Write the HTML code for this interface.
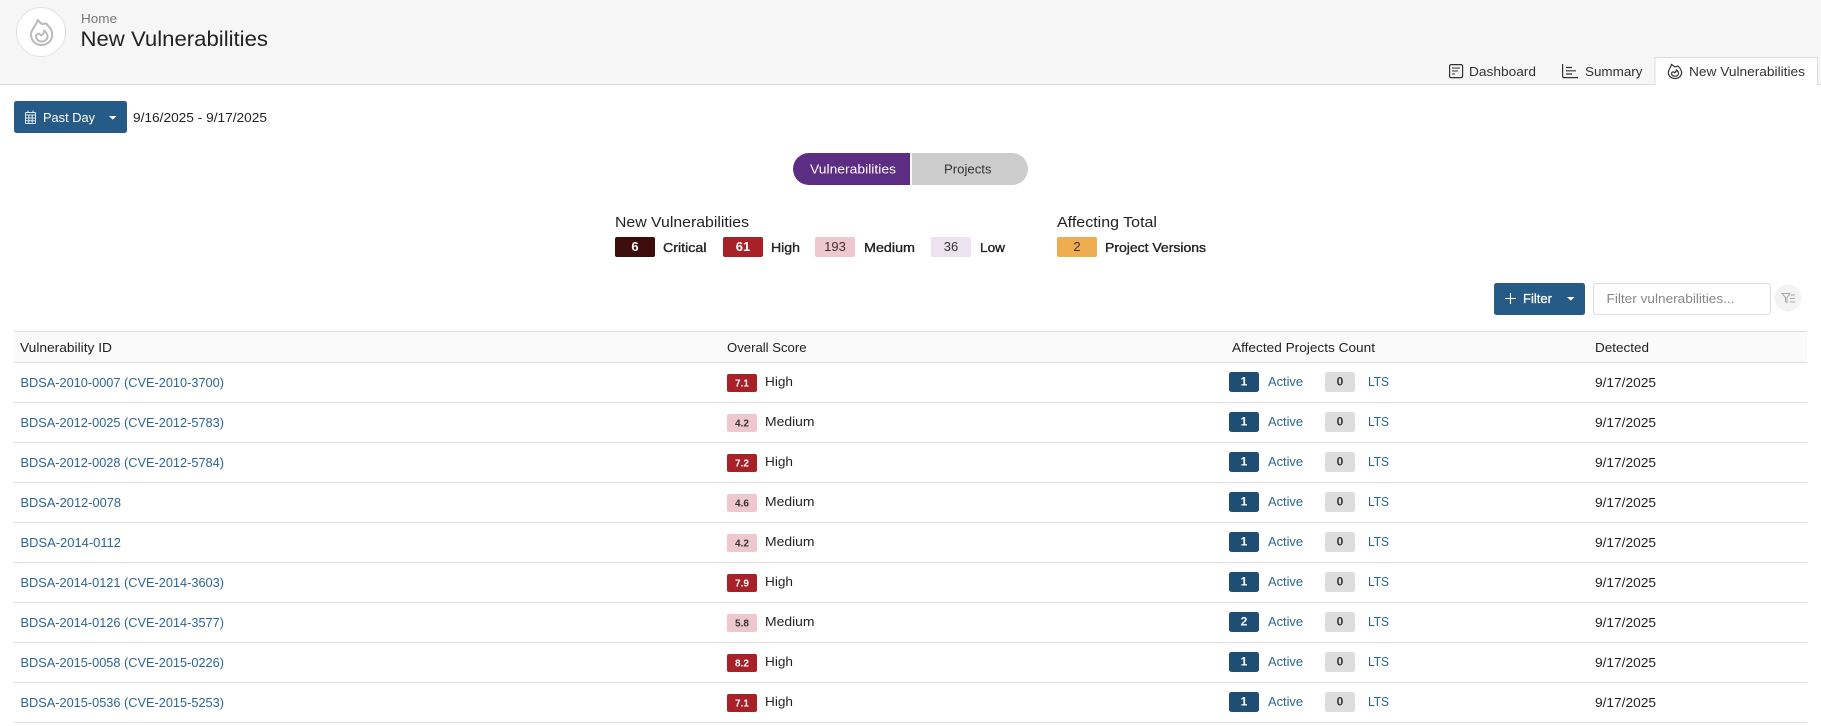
<!DOCTYPE html>
<html><head><meta charset="utf-8"><title>New Vulnerabilities</title>
<style>
html,body{margin:0;padding:0;background:#fff;width:1821px;height:726px;overflow:hidden}
svg{display:block}
text{font-family:"Liberation Sans",sans-serif;font-size:13px;fill:#222}
.b{stroke:#222;stroke-width:.35px}
.bw{font-weight:bold;fill:#fff}
.w{fill:#fff}
.f{fill:#fff;stroke:#fff;stroke-width:.25px}
.l{fill:#2b6593}
.c{text-anchor:middle}
.s{font-size:10px;font-weight:bold}
.n{font-size:12px;font-weight:bold}
</style></head><body>
<svg width="1821" height="726" viewBox="0 0 1821 726" xmlns="http://www.w3.org/2000/svg">
<!-- header -->
<rect width="1821" height="84" fill="#f6f6f6"/>
<rect y="84" width="1821" height="1" fill="#dcdcdc"/>
<circle cx="41" cy="32" r="24.5" fill="#fff" stroke="#e2e2e2"/>
<g fill="none" stroke="#bbbbbb" stroke-width="2" stroke-linejoin="round">
<path d="M37.7 20 L41.8 24 L46 23.5 C49.5 27 52.2 30 52.2 34.5 C52.2 40.5 47.5 45 41.5 45 C35.5 45 31 40.5 31 34.5 C31 29 35.8 26.5 37.7 20Z"/>
<path d="M36 35.5 C36 39.5 38.5 41.5 41.5 41.5 C45 41.5 47.5 39.5 47.5 36.5 C47.5 34 46 32.5 44 30.5 C44 33.5 43 34.5 41 35.5 C39.5 33 38 33 36 35.5Z"/>
</g>
<text x="81" y="23" textLength="36" lengthAdjust="spacingAndGlyphs" style="fill:#777">Home</text>
<text x="80.5" y="46" textLength="187.5" lengthAdjust="spacingAndGlyphs" style="font-size:21.5px">New Vulnerabilities</text>

<!-- tabs -->
<path d="M1655 85 V57.5 H1817.5 V85" fill="#fff" stroke="#dcdcdc"/>
<rect x="1656" y="84" width="161" height="2" fill="#fff"/>
<g fill="none" stroke="#333" stroke-width="1.2">
<rect x="1449.6" y="64.6" width="13" height="13" rx="1.5"/>
<path d="M1452 68 H1460 M1452 71 H1458 M1452 74 H1455" stroke="#777" stroke-width="1.6"/>
<path d="M1562.6 64 V76 Q1562.6 77.6 1564 77.6 H1578"/>
<path d="M1566 67.5 H1572 M1566 70.8 H1576 M1566 74 H1572"/>
<path d="M1671.5 64.5 L1675 67 L1678 66 C1680 68 1681.6 70 1681.6 72.5 C1681.6 76 1678.8 78.5 1675 78.5 C1671.2 78.5 1668.4 76 1668.4 72.5 C1668.4 69 1670.8 68 1671.5 64.5Z"/>
<path d="M1671.5 73 C1671.5 75.2 1673 76.2 1675 76.2 C1677 76.2 1678.5 75 1678.5 73.3 C1678.5 71.8 1677.5 70.8 1676.5 70 C1676.5 71.5 1675.6 72.2 1674.6 72.8 C1673.5 71.4 1672.6 71.6 1671.5 73Z"/>
</g>
<text x="1469" y="76" textLength="67" lengthAdjust="spacingAndGlyphs" style="fill:#333">Dashboard</text>
<text x="1585" y="76" textLength="57.5" lengthAdjust="spacingAndGlyphs" style="fill:#333">Summary</text>
<text x="1689" y="76" textLength="116" lengthAdjust="spacingAndGlyphs" style="fill:#333">New Vulnerabilities</text>

<!-- date button -->
<rect x="14" y="101" width="113" height="32" rx="2.5" fill="#265b88"/>
<g fill="none" stroke="#dfe8f0" stroke-width="1">
<rect x="25.5" y="112.5" width="10" height="11" rx="0.5"/>
<path d="M25.5 115 H35.5 M25.5 118 H35.5 M25.5 120.8 H35.5 M28.8 115 V123.5 M32.2 115 V123.5 M28 110.5 V112.5 M33 110.5 V112.5"/>
</g>
<text x="43" y="122" textLength="52" lengthAdjust="spacingAndGlyphs" class="w">Past Day</text>
<path d="M109 116 H116.5 L112.75 119.6Z" fill="#fff"/>
<text x="133" y="122" textLength="134" lengthAdjust="spacingAndGlyphs">9/16/2025 - 9/17/2025</text>

<!-- toggle -->
<path d="M910 153 H809 A16 16 0 0 0 809 185 H910Z" fill="#5c2d82"/>
<path d="M912 153 H1012 A16 16 0 0 1 1012 185 H912Z" fill="#cccccc"/>
<text x="810" y="173.5" textLength="86" lengthAdjust="spacingAndGlyphs" class="w">Vulnerabilities</text>
<text x="944" y="173.5" textLength="47.5" lengthAdjust="spacingAndGlyphs" style="fill:#333">Projects</text>

<!-- summary -->
<text x="615" y="227" textLength="134" lengthAdjust="spacingAndGlyphs" style="font-size:14.5px">New Vulnerabilities</text>
<text x="1057" y="227" textLength="100" lengthAdjust="spacingAndGlyphs" style="font-size:14.5px">Affecting Total</text>
<rect x="615" y="237" width="40" height="20" rx="2" fill="#3d0c0c"/>
<rect x="723" y="237" width="40" height="20" rx="2" fill="#a92128"/>
<rect x="815" y="237" width="40" height="20" rx="2" fill="#efc8cf"/>
<rect x="931" y="237" width="40" height="20" rx="2" fill="#ede3f0"/>
<rect x="1057" y="237" width="40" height="20" rx="2" fill="#f0ad50"/>
<text x="635" y="251" class="c bw">6</text>
<text x="743" y="251" class="c bw">61</text>
<text x="835" y="251" class="c" style="fill:#333">193</text>
<text x="951" y="251" class="c" style="fill:#333">36</text>
<text x="1077" y="251" class="c" style="fill:#333">2</text>
<text x="663" y="252" textLength="43.5" lengthAdjust="spacingAndGlyphs" class="b">Critical</text>
<text x="771" y="252" textLength="29" lengthAdjust="spacingAndGlyphs" class="b">High</text>
<text x="864" y="252" textLength="51" lengthAdjust="spacingAndGlyphs" class="b">Medium</text>
<text x="980" y="252" textLength="25" lengthAdjust="spacingAndGlyphs" class="b">Low</text>
<text x="1105" y="252" textLength="101" lengthAdjust="spacingAndGlyphs" class="b">Project Versions</text>

<!-- filter -->
<rect x="1494" y="283" width="91" height="32" rx="2.5" fill="#265b88"/>
<path d="M1505 298.5 H1516 M1510.5 293 V304" stroke="#fff" stroke-width="1.1"/>
<text x="1523" y="303" textLength="29" lengthAdjust="spacingAndGlyphs" class="f">Filter</text>
<path d="M1567 297 H1574.5 L1570.75 300.6Z" fill="#fff"/>
<rect x="1593.5" y="283.5" width="177" height="31" rx="3" fill="#fff" stroke="#dddddd"/>
<text x="1606.5" y="303" textLength="128" lengthAdjust="spacingAndGlyphs" style="fill:#888">Filter vulnerabilities...</text>
<circle cx="1788" cy="298" r="13.5" fill="#f3f3f3"/>
<path d="M1782 293.5 H1790 L1787 297.5 V302.5 L1785.5 301.5 V297.5Z M1791 295 H1795 M1790 298.5 H1795 M1790 302 H1795" fill="none" stroke="#aaa" stroke-width="1"/>

<!-- table head -->
<rect x="14" y="331" width="1793" height="31" fill="#fafafa"/>
<rect x="14" y="331" width="1793" height="1" fill="#dedede"/>
<text x="20" y="352" textLength="92" lengthAdjust="spacingAndGlyphs">Vulnerability ID</text>
<text x="727" y="352" textLength="79.5" lengthAdjust="spacingAndGlyphs">Overall Score</text>
<text x="1232" y="352" textLength="143" lengthAdjust="spacingAndGlyphs">Affected Projects Count</text>
<text x="1595" y="352" textLength="54" lengthAdjust="spacingAndGlyphs">Detected</text>

<!-- row lines -->
<g fill="#dedede">
<rect x="14" y="362" width="1793" height="1"/>
<rect x="14" y="402" width="1793" height="1"/><rect x="14" y="442" width="1793" height="1"/><rect x="14" y="482" width="1793" height="1"/>
<rect x="14" y="522" width="1793" height="1"/><rect x="14" y="562" width="1793" height="1"/><rect x="14" y="602" width="1793" height="1"/>
<rect x="14" y="642" width="1793" height="1"/><rect x="14" y="682" width="1793" height="1"/><rect x="14" y="722" width="1793" height="1"/>
</g>

<!-- row 1 -->
<g transform="translate(0,0)">
<text x="20.5" y="387" textLength="203.5" lengthAdjust="spacingAndGlyphs" class="l">BDSA-2010-0007 (CVE-2010-3700)</text>
<rect x="727" y="374" width="30" height="18" rx="2" fill="#a92128"/><text x="742" y="386.5" class="c s w">7.1</text>
<text x="765" y="386" textLength="28" lengthAdjust="spacingAndGlyphs">High</text>
<rect x="1229" y="372" width="30" height="20" rx="2.5" fill="#1f4e75"/><text x="1244" y="385.5" class="c n w">1</text>
<text x="1268" y="386" textLength="35" lengthAdjust="spacingAndGlyphs" class="l">Active</text>
<rect x="1325" y="372" width="30" height="20" rx="2.5" fill="#dddddd"/><text x="1340" y="385.5" class="c n" style="fill:#333">0</text>
<text x="1368" y="386" textLength="21" lengthAdjust="spacingAndGlyphs" class="l">LTS</text>
<text x="1595" y="387" textLength="61" lengthAdjust="spacingAndGlyphs">9/17/2025</text>
</g>
<!-- row 2 -->
<g transform="translate(0,40)">
<text x="20.5" y="387" textLength="203.5" lengthAdjust="spacingAndGlyphs" class="l">BDSA-2012-0025 (CVE-2012-5783)</text>
<rect x="727" y="374" width="30" height="18" rx="2" fill="#efc8cf"/><text x="742" y="386.5" class="c s" style="fill:#333">4.2</text>
<text x="765" y="386" textLength="49.5" lengthAdjust="spacingAndGlyphs">Medium</text>
<rect x="1229" y="372" width="30" height="20" rx="2.5" fill="#1f4e75"/><text x="1244" y="385.5" class="c n w">1</text>
<text x="1268" y="386" textLength="35" lengthAdjust="spacingAndGlyphs" class="l">Active</text>
<rect x="1325" y="372" width="30" height="20" rx="2.5" fill="#dddddd"/><text x="1340" y="385.5" class="c n" style="fill:#333">0</text>
<text x="1368" y="386" textLength="21" lengthAdjust="spacingAndGlyphs" class="l">LTS</text>
<text x="1595" y="387" textLength="61" lengthAdjust="spacingAndGlyphs">9/17/2025</text>
</g>
<!-- row 3 -->
<g transform="translate(0,80)">
<text x="20.5" y="387" textLength="203.5" lengthAdjust="spacingAndGlyphs" class="l">BDSA-2012-0028 (CVE-2012-5784)</text>
<rect x="727" y="374" width="30" height="18" rx="2" fill="#a92128"/><text x="742" y="386.5" class="c s w">7.2</text>
<text x="765" y="386" textLength="28" lengthAdjust="spacingAndGlyphs">High</text>
<rect x="1229" y="372" width="30" height="20" rx="2.5" fill="#1f4e75"/><text x="1244" y="385.5" class="c n w">1</text>
<text x="1268" y="386" textLength="35" lengthAdjust="spacingAndGlyphs" class="l">Active</text>
<rect x="1325" y="372" width="30" height="20" rx="2.5" fill="#dddddd"/><text x="1340" y="385.5" class="c n" style="fill:#333">0</text>
<text x="1368" y="386" textLength="21" lengthAdjust="spacingAndGlyphs" class="l">LTS</text>
<text x="1595" y="387" textLength="61" lengthAdjust="spacingAndGlyphs">9/17/2025</text>
</g>
<!-- row 4 -->
<g transform="translate(0,120)">
<text x="20.5" y="387" textLength="100.5" lengthAdjust="spacingAndGlyphs" class="l">BDSA-2012-0078</text>
<rect x="727" y="374" width="30" height="18" rx="2" fill="#efc8cf"/><text x="742" y="386.5" class="c s" style="fill:#333">4.6</text>
<text x="765" y="386" textLength="49.5" lengthAdjust="spacingAndGlyphs">Medium</text>
<rect x="1229" y="372" width="30" height="20" rx="2.5" fill="#1f4e75"/><text x="1244" y="385.5" class="c n w">1</text>
<text x="1268" y="386" textLength="35" lengthAdjust="spacingAndGlyphs" class="l">Active</text>
<rect x="1325" y="372" width="30" height="20" rx="2.5" fill="#dddddd"/><text x="1340" y="385.5" class="c n" style="fill:#333">0</text>
<text x="1368" y="386" textLength="21" lengthAdjust="spacingAndGlyphs" class="l">LTS</text>
<text x="1595" y="387" textLength="61" lengthAdjust="spacingAndGlyphs">9/17/2025</text>
</g>
<!-- row 5 -->
<g transform="translate(0,160)">
<text x="20.5" y="387" textLength="100.5" lengthAdjust="spacingAndGlyphs" class="l">BDSA-2014-0112</text>
<rect x="727" y="374" width="30" height="18" rx="2" fill="#efc8cf"/><text x="742" y="386.5" class="c s" style="fill:#333">4.2</text>
<text x="765" y="386" textLength="49.5" lengthAdjust="spacingAndGlyphs">Medium</text>
<rect x="1229" y="372" width="30" height="20" rx="2.5" fill="#1f4e75"/><text x="1244" y="385.5" class="c n w">1</text>
<text x="1268" y="386" textLength="35" lengthAdjust="spacingAndGlyphs" class="l">Active</text>
<rect x="1325" y="372" width="30" height="20" rx="2.5" fill="#dddddd"/><text x="1340" y="385.5" class="c n" style="fill:#333">0</text>
<text x="1368" y="386" textLength="21" lengthAdjust="spacingAndGlyphs" class="l">LTS</text>
<text x="1595" y="387" textLength="61" lengthAdjust="spacingAndGlyphs">9/17/2025</text>
</g>
<!-- row 6 -->
<g transform="translate(0,200)">
<text x="20.5" y="387" textLength="203.5" lengthAdjust="spacingAndGlyphs" class="l">BDSA-2014-0121 (CVE-2014-3603)</text>
<rect x="727" y="374" width="30" height="18" rx="2" fill="#a92128"/><text x="742" y="386.5" class="c s w">7.9</text>
<text x="765" y="386" textLength="28" lengthAdjust="spacingAndGlyphs">High</text>
<rect x="1229" y="372" width="30" height="20" rx="2.5" fill="#1f4e75"/><text x="1244" y="385.5" class="c n w">1</text>
<text x="1268" y="386" textLength="35" lengthAdjust="spacingAndGlyphs" class="l">Active</text>
<rect x="1325" y="372" width="30" height="20" rx="2.5" fill="#dddddd"/><text x="1340" y="385.5" class="c n" style="fill:#333">0</text>
<text x="1368" y="386" textLength="21" lengthAdjust="spacingAndGlyphs" class="l">LTS</text>
<text x="1595" y="387" textLength="61" lengthAdjust="spacingAndGlyphs">9/17/2025</text>
</g>
<!-- row 7 -->
<g transform="translate(0,240)">
<text x="20.5" y="387" textLength="203.5" lengthAdjust="spacingAndGlyphs" class="l">BDSA-2014-0126 (CVE-2014-3577)</text>
<rect x="727" y="374" width="30" height="18" rx="2" fill="#efc8cf"/><text x="742" y="386.5" class="c s" style="fill:#333">5.8</text>
<text x="765" y="386" textLength="49.5" lengthAdjust="spacingAndGlyphs">Medium</text>
<rect x="1229" y="372" width="30" height="20" rx="2.5" fill="#1f4e75"/><text x="1244" y="385.5" class="c n w">2</text>
<text x="1268" y="386" textLength="35" lengthAdjust="spacingAndGlyphs" class="l">Active</text>
<rect x="1325" y="372" width="30" height="20" rx="2.5" fill="#dddddd"/><text x="1340" y="385.5" class="c n" style="fill:#333">0</text>
<text x="1368" y="386" textLength="21" lengthAdjust="spacingAndGlyphs" class="l">LTS</text>
<text x="1595" y="387" textLength="61" lengthAdjust="spacingAndGlyphs">9/17/2025</text>
</g>
<!-- row 8 -->
<g transform="translate(0,280)">
<text x="20.5" y="387" textLength="203.5" lengthAdjust="spacingAndGlyphs" class="l">BDSA-2015-0058 (CVE-2015-0226)</text>
<rect x="727" y="374" width="30" height="18" rx="2" fill="#a92128"/><text x="742" y="386.5" class="c s w">8.2</text>
<text x="765" y="386" textLength="28" lengthAdjust="spacingAndGlyphs">High</text>
<rect x="1229" y="372" width="30" height="20" rx="2.5" fill="#1f4e75"/><text x="1244" y="385.5" class="c n w">1</text>
<text x="1268" y="386" textLength="35" lengthAdjust="spacingAndGlyphs" class="l">Active</text>
<rect x="1325" y="372" width="30" height="20" rx="2.5" fill="#dddddd"/><text x="1340" y="385.5" class="c n" style="fill:#333">0</text>
<text x="1368" y="386" textLength="21" lengthAdjust="spacingAndGlyphs" class="l">LTS</text>
<text x="1595" y="387" textLength="61" lengthAdjust="spacingAndGlyphs">9/17/2025</text>
</g>
<!-- row 9 -->
<g transform="translate(0,320)">
<text x="20.5" y="387" textLength="203.5" lengthAdjust="spacingAndGlyphs" class="l">BDSA-2015-0536 (CVE-2015-5253)</text>
<rect x="727" y="374" width="30" height="18" rx="2" fill="#a92128"/><text x="742" y="386.5" class="c s w">7.1</text>
<text x="765" y="386" textLength="28" lengthAdjust="spacingAndGlyphs">High</text>
<rect x="1229" y="372" width="30" height="20" rx="2.5" fill="#1f4e75"/><text x="1244" y="385.5" class="c n w">1</text>
<text x="1268" y="386" textLength="35" lengthAdjust="spacingAndGlyphs" class="l">Active</text>
<rect x="1325" y="372" width="30" height="20" rx="2.5" fill="#dddddd"/><text x="1340" y="385.5" class="c n" style="fill:#333">0</text>
<text x="1368" y="386" textLength="21" lengthAdjust="spacingAndGlyphs" class="l">LTS</text>
<text x="1595" y="387" textLength="61" lengthAdjust="spacingAndGlyphs">9/17/2025</text>
</g>
</svg>
</body></html>
